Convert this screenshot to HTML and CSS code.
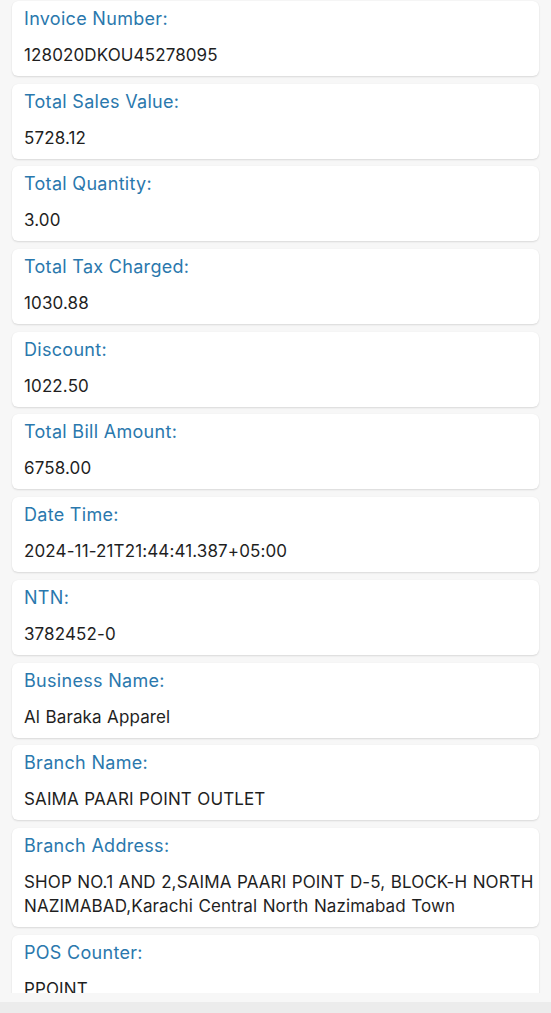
FILE: index.html
```html
<!DOCTYPE html>
<html>
<head>
<meta charset="utf-8">
<link rel="stylesheet" href="styles.css">
</head>
<body>
<div class="screen">
  <div class="list">
    <div class="card"><div class="label">Invoice Number:</div><div class="value">128020DKOU45278095</div></div>
    <div class="card"><div class="label">Total Sales Value:</div><div class="value">5728.12</div></div>
    <div class="card"><div class="label">Total Quantity:</div><div class="value">3.00</div></div>
    <div class="card"><div class="label">Total Tax Charged:</div><div class="value">1030.88</div></div>
    <div class="card"><div class="label">Discount:</div><div class="value">1022.50</div></div>
    <div class="card"><div class="label">Total Bill Amount:</div><div class="value">6758.00</div></div>
    <div class="card"><div class="label">Date Time:</div><div class="value">2024-11-21T21:44:41.387+05:00</div></div>
    <div class="card"><div class="label">NTN:</div><div class="value">3782452-0</div></div>
    <div class="card"><div class="label">Business Name:</div><div class="value">Al Baraka Apparel</div></div>
    <div class="card"><div class="label">Branch Name:</div><div class="value">SAIMA PAARI POINT OUTLET</div></div>
    <div class="card"><div class="label">Branch Address:</div><div class="value">SHOP NO.1 AND 2,SAIMA PAARI POINT D-5, BLOCK-H NORTH NAZIMABAD,Karachi Central North Nazimabad Town</div></div>
    <div class="card"><div class="label">POS Counter:</div><div class="value">PPOINT</div></div>
  </div>
  <div class="bottom-bar"></div>
</div>
</body>
</html>
```
FILE: styles.css
```css
html, body {
  margin: 0;
  padding: 0;
  background: #f7f7f7;
}
body {
  font-family: Inter, "Noto Sans", sans-serif;
  width: 551px;
  height: 1013px;
  overflow: hidden;
}
.screen {
  display: flex;
  flex-direction: column;
  height: 1013px;
}
.list {
  height: 993px;
  overflow: hidden;
  display: flex;
  flex-direction: column;
  gap: 7.7px;
  padding-top: 1px;
  box-sizing: border-box;
}
.card {
  flex-shrink: 0;
  margin: 0 12px;
  background: #ffffff;
  border-radius: 6px;
  box-shadow: 0 1px 2px rgba(0,0,0,0.12), 0 0 1px rgba(0,0,0,0.05);
  padding: 6px 3px 9px 12px;
}
.label {
  color: #2a78ad;
  font-size: 18px;
  letter-spacing: 0.3px;
  line-height: 24px;
  margin-bottom: 12px;
}
.value {
  color: #1f1f1f;
  font-size: 17px;
  letter-spacing: 0.12px;
  word-spacing: 0.5px;
  line-height: 24px;
}
.bottom-bar {
  margin-top: 9px;
  height: 11px;
  background: #ececec;
}
```
